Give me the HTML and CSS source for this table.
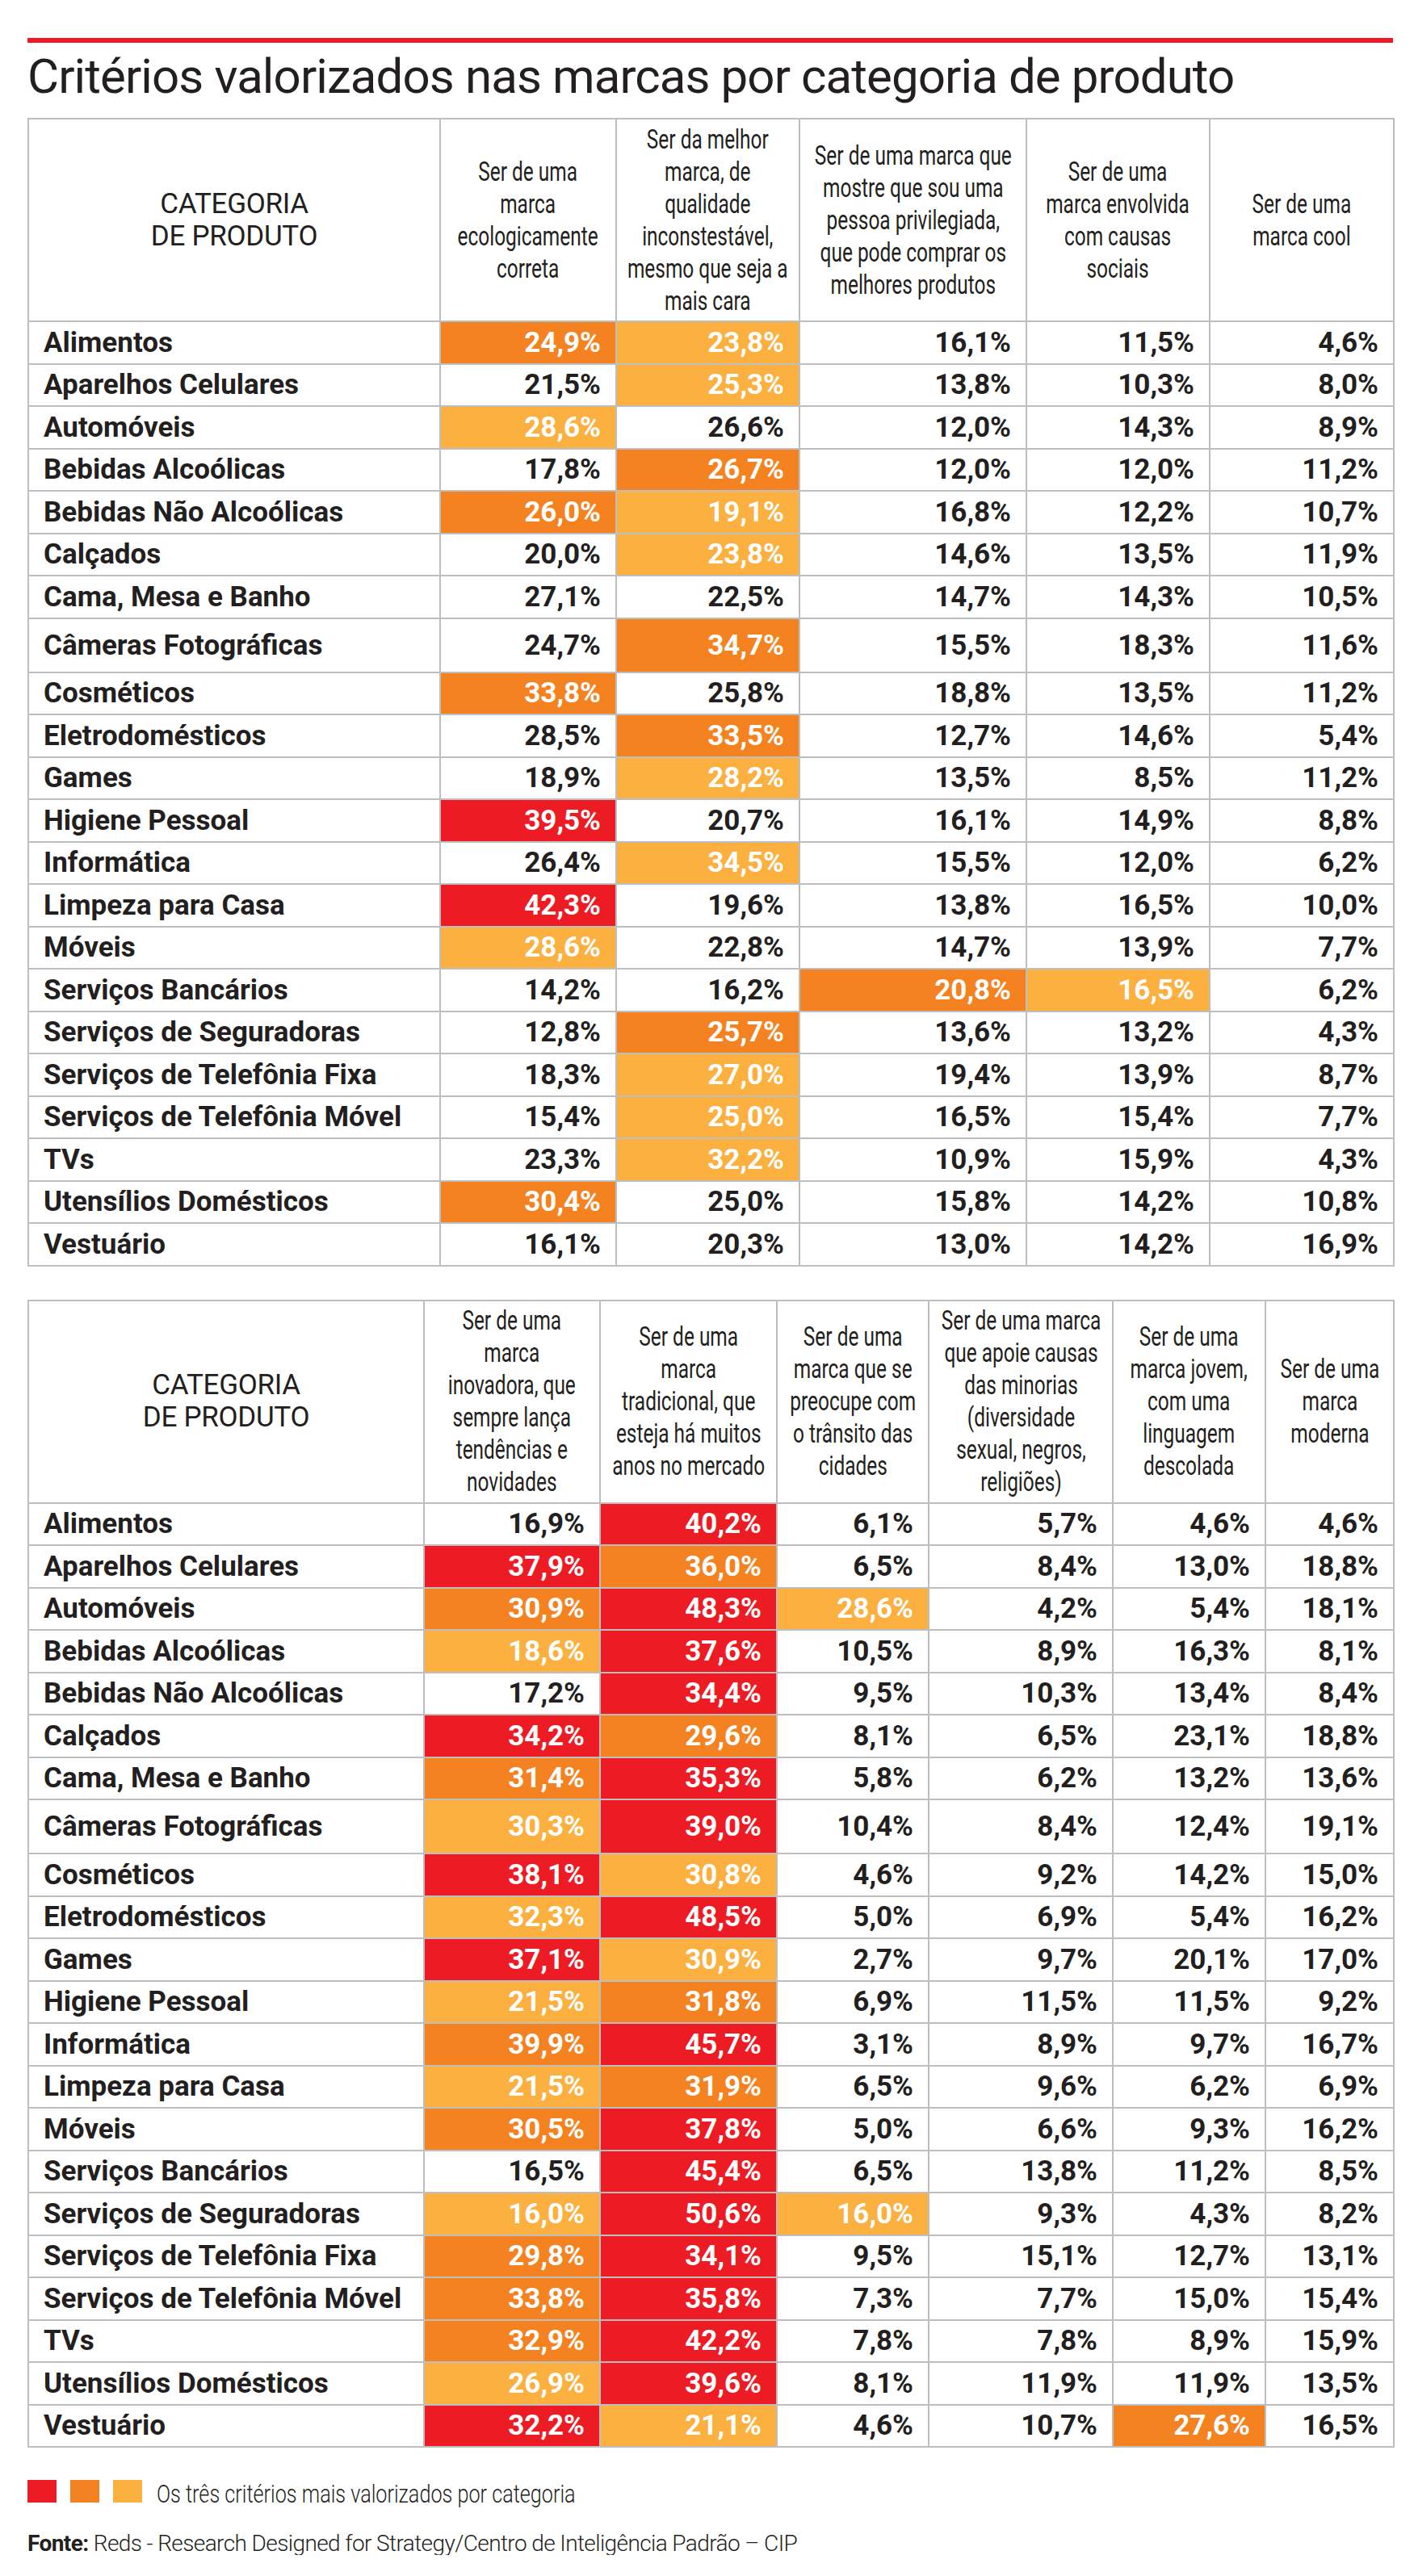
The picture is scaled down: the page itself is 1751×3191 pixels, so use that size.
FILE: index.html
```html
<!DOCTYPE html>
<html lang="pt-BR">
<head>
<meta charset="utf-8">
<title>Critérios valorizados nas marcas por categoria de produto</title>
<link rel="stylesheet" href="styles.css">
</head>
<body>
<div class="page">
  <div class="rule"></div>
  <h1 class="title">Critérios valorizados nas marcas por categoria de produto</h1>

  <table class="grid">
    <colgroup>
      <col class="c-cat1"><col class="w218"><col class="w227"><col class="w281"><col class="w227"><col class="w228">
    </colgroup>
    <thead>
      <tr>
        <th class="cat">CATEGORIA<br>DE PRODUTO</th>
        <th><div class="hd"><span>Ser de uma<br>marca<br>ecologicamente<br>correta</span></div></th>
        <th><div class="hd"><span>Ser da melhor<br>marca, de<br>qualidade<br>inconstestável,<br>mesmo que seja a<br>mais cara</span></div></th>
        <th><div class="hd"><span>Ser de uma marca que<br>mostre que sou uma<br>pessoa privilegiada,<br>que pode comprar os<br>melhores produtos</span></div></th>
        <th><div class="hd"><span>Ser de uma<br>marca envolvida<br>com causas<br>sociais</span></div></th>
        <th><div class="hd"><span>Ser de uma<br>marca cool</span></div></th>
      </tr>
    </thead>
    <tbody>
      <tr><td class="lbl">Alimentos</td><td class="o">24,9%</td><td class="y">23,8%</td><td>16,1%</td><td>11,5%</td><td>4,6%</td></tr>
      <tr><td class="lbl">Aparelhos Celulares</td><td>21,5%</td><td class="y">25,3%</td><td>13,8%</td><td>10,3%</td><td>8,0%</td></tr>
      <tr><td class="lbl">Automóveis</td><td class="y">28,6%</td><td>26,6%</td><td>12,0%</td><td>14,3%</td><td>8,9%</td></tr>
      <tr><td class="lbl">Bebidas Alcoólicas</td><td>17,8%</td><td class="o">26,7%</td><td>12,0%</td><td>12,0%</td><td>11,2%</td></tr>
      <tr><td class="lbl">Bebidas Não Alcoólicas</td><td class="o">26,0%</td><td class="y">19,1%</td><td>16,8%</td><td>12,2%</td><td>10,7%</td></tr>
      <tr><td class="lbl">Calçados</td><td>20,0%</td><td class="y">23,8%</td><td>14,6%</td><td>13,5%</td><td>11,9%</td></tr>
      <tr><td class="lbl">Cama, Mesa e Banho</td><td>27,1%</td><td>22,5%</td><td>14,7%</td><td>14,3%</td><td>10,5%</td></tr>
      <tr class="tall"><td class="lbl">Câmeras Fotográficas</td><td>24,7%</td><td class="o">34,7%</td><td>15,5%</td><td>18,3%</td><td>11,6%</td></tr>
      <tr><td class="lbl">Cosméticos</td><td class="o">33,8%</td><td>25,8%</td><td>18,8%</td><td>13,5%</td><td>11,2%</td></tr>
      <tr><td class="lbl">Eletrodomésticos</td><td>28,5%</td><td class="o">33,5%</td><td>12,7%</td><td>14,6%</td><td>5,4%</td></tr>
      <tr><td class="lbl">Games</td><td>18,9%</td><td class="y">28,2%</td><td>13,5%</td><td>8,5%</td><td>11,2%</td></tr>
      <tr><td class="lbl">Higiene Pessoal</td><td class="r">39,5%</td><td>20,7%</td><td>16,1%</td><td>14,9%</td><td>8,8%</td></tr>
      <tr><td class="lbl">Informática</td><td>26,4%</td><td class="y">34,5%</td><td>15,5%</td><td>12,0%</td><td>6,2%</td></tr>
      <tr><td class="lbl">Limpeza para Casa</td><td class="r">42,3%</td><td>19,6%</td><td>13,8%</td><td>16,5%</td><td>10,0%</td></tr>
      <tr><td class="lbl">Móveis</td><td class="y">28,6%</td><td>22,8%</td><td>14,7%</td><td>13,9%</td><td>7,7%</td></tr>
      <tr><td class="lbl">Serviços Bancários</td><td>14,2%</td><td>16,2%</td><td class="o">20,8%</td><td class="y">16,5%</td><td>6,2%</td></tr>
      <tr><td class="lbl">Serviços de Seguradoras</td><td>12,8%</td><td class="o">25,7%</td><td>13,6%</td><td>13,2%</td><td>4,3%</td></tr>
      <tr><td class="lbl">Serviços de Telefônia Fixa</td><td>18,3%</td><td class="y">27,0%</td><td>19,4%</td><td>13,9%</td><td>8,7%</td></tr>
      <tr><td class="lbl">Serviços de Telefônia Móvel</td><td>15,4%</td><td class="y">25,0%</td><td>16,5%</td><td>15,4%</td><td>7,7%</td></tr>
      <tr><td class="lbl">TVs</td><td>23,3%</td><td class="y">32,2%</td><td>10,9%</td><td>15,9%</td><td>4,3%</td></tr>
      <tr><td class="lbl">Utensílios Domésticos</td><td class="o">30,4%</td><td>25,0%</td><td>15,8%</td><td>14,2%</td><td>10,8%</td></tr>
      <tr><td class="lbl">Vestuário</td><td>16,1%</td><td>20,3%</td><td>13,0%</td><td>14,2%</td><td>16,9%</td></tr>
    </tbody>
  </table>

  <table class="grid second">
    <colgroup>
      <col class="c-cat2"><col class="w218"><col class="w219"><col class="w188"><col class="w228"><col class="w189"><col class="w159">
    </colgroup>
    <thead>
      <tr>
        <th class="cat">CATEGORIA<br>DE PRODUTO</th>
        <th><div class="hd"><span>Ser de uma<br>marca<br>inovadora, que<br>sempre lança<br>tendências e<br>novidades</span></div></th>
        <th><div class="hd"><span>Ser de uma<br>marca<br>tradicional, que<br>esteja há muitos<br>anos no mercado</span></div></th>
        <th><div class="hd"><span>Ser de uma<br>marca que se<br>preocupe com<br>o trânsito das<br>cidades</span></div></th>
        <th><div class="hd"><span>Ser de uma marca<br>que apoie causas<br>das minorias<br>(diversidade<br>sexual, negros,<br>religiões)</span></div></th>
        <th><div class="hd"><span>Ser de uma<br>marca jovem,<br>com uma<br>linguagem<br>descolada</span></div></th>
        <th><div class="hd"><span>Ser de uma<br>marca<br>moderna</span></div></th>
      </tr>
    </thead>
    <tbody>
      <tr><td class="lbl">Alimentos</td><td>16,9%</td><td class="r">40,2%</td><td>6,1%</td><td>5,7%</td><td>4,6%</td><td>4,6%</td></tr>
      <tr><td class="lbl">Aparelhos Celulares</td><td class="r">37,9%</td><td class="o">36,0%</td><td>6,5%</td><td>8,4%</td><td>13,0%</td><td>18,8%</td></tr>
      <tr><td class="lbl">Automóveis</td><td class="o">30,9%</td><td class="r">48,3%</td><td class="y">28,6%</td><td>4,2%</td><td>5,4%</td><td>18,1%</td></tr>
      <tr><td class="lbl">Bebidas Alcoólicas</td><td class="y">18,6%</td><td class="r">37,6%</td><td>10,5%</td><td>8,9%</td><td>16,3%</td><td>8,1%</td></tr>
      <tr><td class="lbl">Bebidas Não Alcoólicas</td><td>17,2%</td><td class="r">34,4%</td><td>9,5%</td><td>10,3%</td><td>13,4%</td><td>8,4%</td></tr>
      <tr><td class="lbl">Calçados</td><td class="r">34,2%</td><td class="o">29,6%</td><td>8,1%</td><td>6,5%</td><td>23,1%</td><td>18,8%</td></tr>
      <tr><td class="lbl">Cama, Mesa e Banho</td><td class="o">31,4%</td><td class="r">35,3%</td><td>5,8%</td><td>6,2%</td><td>13,2%</td><td>13,6%</td></tr>
      <tr class="tall"><td class="lbl">Câmeras Fotográficas</td><td class="y">30,3%</td><td class="r">39,0%</td><td>10,4%</td><td>8,4%</td><td>12,4%</td><td>19,1%</td></tr>
      <tr><td class="lbl">Cosméticos</td><td class="r">38,1%</td><td class="y">30,8%</td><td>4,6%</td><td>9,2%</td><td>14,2%</td><td>15,0%</td></tr>
      <tr><td class="lbl">Eletrodomésticos</td><td class="y">32,3%</td><td class="r">48,5%</td><td>5,0%</td><td>6,9%</td><td>5,4%</td><td>16,2%</td></tr>
      <tr><td class="lbl">Games</td><td class="r">37,1%</td><td class="y">30,9%</td><td>2,7%</td><td>9,7%</td><td>20,1%</td><td>17,0%</td></tr>
      <tr><td class="lbl">Higiene Pessoal</td><td class="y">21,5%</td><td class="o">31,8%</td><td>6,9%</td><td>11,5%</td><td>11,5%</td><td>9,2%</td></tr>
      <tr><td class="lbl">Informática</td><td class="o">39,9%</td><td class="r">45,7%</td><td>3,1%</td><td>8,9%</td><td>9,7%</td><td>16,7%</td></tr>
      <tr><td class="lbl">Limpeza para Casa</td><td class="y">21,5%</td><td class="o">31,9%</td><td>6,5%</td><td>9,6%</td><td>6,2%</td><td>6,9%</td></tr>
      <tr><td class="lbl">Móveis</td><td class="o">30,5%</td><td class="r">37,8%</td><td>5,0%</td><td>6,6%</td><td>9,3%</td><td>16,2%</td></tr>
      <tr><td class="lbl">Serviços Bancários</td><td>16,5%</td><td class="r">45,4%</td><td>6,5%</td><td>13,8%</td><td>11,2%</td><td>8,5%</td></tr>
      <tr><td class="lbl">Serviços de Seguradoras</td><td class="y">16,0%</td><td class="r">50,6%</td><td class="y">16,0%</td><td>9,3%</td><td>4,3%</td><td>8,2%</td></tr>
      <tr><td class="lbl">Serviços de Telefônia Fixa</td><td class="o">29,8%</td><td class="r">34,1%</td><td>9,5%</td><td>15,1%</td><td>12,7%</td><td>13,1%</td></tr>
      <tr><td class="lbl">Serviços de Telefônia Móvel</td><td class="o">33,8%</td><td class="r">35,8%</td><td>7,3%</td><td>7,7%</td><td>15,0%</td><td>15,4%</td></tr>
      <tr><td class="lbl">TVs</td><td class="o">32,9%</td><td class="r">42,2%</td><td>7,8%</td><td>7,8%</td><td>8,9%</td><td>15,9%</td></tr>
      <tr><td class="lbl">Utensílios Domésticos</td><td class="y">26,9%</td><td class="r">39,6%</td><td>8,1%</td><td>11,9%</td><td>11,9%</td><td>13,5%</td></tr>
      <tr><td class="lbl">Vestuário</td><td class="r">32,2%</td><td class="y">21,1%</td><td>4,6%</td><td>10,7%</td><td class="o">27,6%</td><td>16,5%</td></tr>
    </tbody>
  </table>

  <div class="legend">
    <span class="swatch sw-red"></span>
    <span class="swatch sw-dark"></span>
    <span class="swatch sw-light"></span>
    <span class="legend-text">Os três critérios mais valorizados por categoria</span>
  </div>
  <p class="source"><b>Fonte:</b> Reds - Research Designed for Strategy/Centro de Inteligência Padrão – CIP</p>
</div>
</body>
</html>
```
FILE: styles.css
```css
html, body {
  margin: 0;
  padding: 0;
  background: #ffffff;
}

body {
  color: #231f20;
  font-family: Roboto, "Liberation Sans", sans-serif;
}

.page {
  width: 1691px;
  padding: 47px 0 0 34px;
}

.rule {
  height: 6px;
  background: #ed1c24;
}

.title {
  margin: 12px 0 21px 0;
  font-family: Roboto, "Liberation Sans", sans-serif;
  font-weight: 400;
  font-size: 60px;
  line-height: 60px;
  letter-spacing: -0.9px;
  white-space: nowrap;
  color: #231f20;
}

.grid {
  width: 1691px;
  border-collapse: collapse;
  table-layout: fixed;
}

.grid.second {
  margin-top: 41px;
}

.c-cat1 { width: 510px; }
.c-cat2 { width: 490px; }
.w159 { width: 159px; }
.w188 { width: 188px; }
.w189 { width: 189px; }
.w218 { width: 218px; }
.w219 { width: 219px; }
.w227 { width: 227px; }
.w228 { width: 228px; }
.w281 { width: 281px; }

.grid th,
.grid td {
  border: 2px solid #bcbec0;
  padding: 0;
}

.grid thead tr {
  height: 251px;
}

.grid th {
  font-family: Roboto, "Liberation Sans", sans-serif;
  font-weight: 400;
  font-size: 33px;
  line-height: 40px;
  text-align: center;
  vertical-align: middle;
  white-space: nowrap;
  color: #231f20;
}

.grid th .hd {
  display: flex;
  justify-content: center;
}

.grid th .hd span {
  display: block;
  flex: none;
  text-align: center;
  transform: scaleX(0.74);
  transform-origin: center;
}

.grid th.cat {
  font-size: 35px;
  letter-spacing: -0.3px;
  line-height: 40px;
}

.grid tbody tr {
  height: 52.5px;
}

.grid tbody tr.tall {
  height: 67px;
}

.grid td {
  font-family: Roboto, "Liberation Sans", sans-serif;
  font-weight: 700;
  font-size: 35px;
  line-height: 1;
  text-align: right;
  padding-right: 18px;
  vertical-align: middle;
  white-space: nowrap;
  color: #231f20;
}

.grid td.lbl {
  text-align: left;
  padding-left: 18px;
  padding-right: 0;
}

.grid td.r { background: #ed1c24; color: #ffffff; }
.grid td.o { background: #f58220; color: #ffffff; }
.grid td.y { background: #fbb040; color: #ffffff; }

.legend {
  display: flex;
  align-items: baseline;
  margin-top: 40px;
}

.swatch {
  flex: none;
  width: 36px;
  height: 28px;
  margin-right: 17px;
}

.sw-red { background: #ed1c24; }
.sw-dark { background: #f58220; }
.sw-light { background: #fbb040; margin-right: 18px; }

.legend-text {
  flex: none;
  font-family: Roboto, "Liberation Sans", sans-serif;
  font-weight: 300;
  font-size: 31px;
  line-height: 30px;
  white-space: nowrap;
  color: #231f20;
  transform: scaleX(0.813);
  transform-origin: left center;
}

.source {
  margin: 32px 0 0 0;
  font-family: Roboto, "Liberation Sans", sans-serif;
  font-weight: 300;
  font-size: 28px;
  line-height: 28px;
  letter-spacing: -0.6px;
  white-space: nowrap;
  color: #231f20;
}

.source b {
  font-weight: 700;
}
```
